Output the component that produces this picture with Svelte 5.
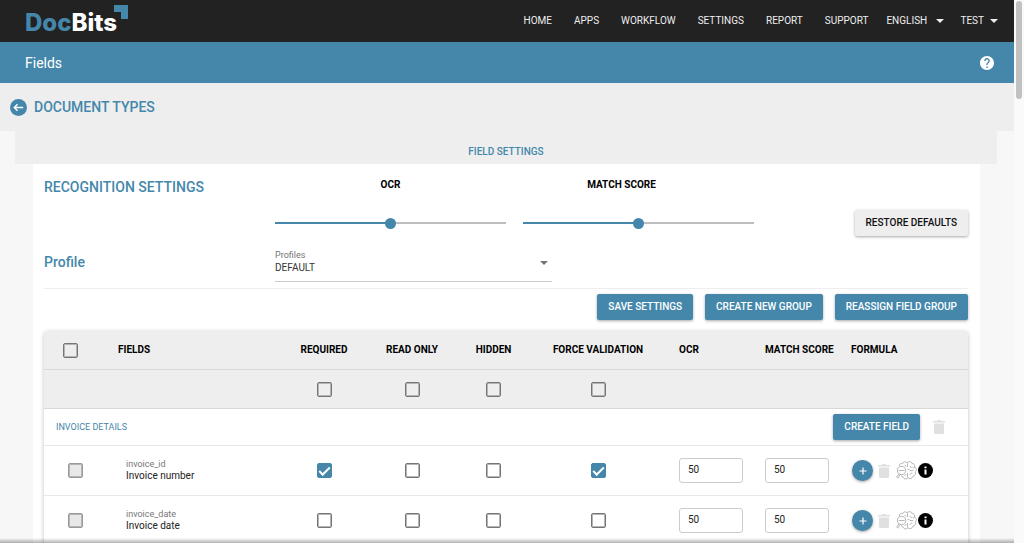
<script>
  const navItems = ['HOME', 'APPS', 'WORKFLOW', 'SETTINGS', 'REPORT', 'SUPPORT'];
  const flags = ['Required', 'Read only', 'Hidden', 'Force validation'];

  let ocr = 50;
  let matchScore = 50;

  let fields = [
    { id: 'invoice_id', name: 'Invoice number', flags: [true, false, false, true], ocr: 50, match: 50 },
    { id: 'invoice_date', name: 'Invoice date', flags: [false, false, false, false], ocr: 50, match: 50 }
  ];
</script>

<div class="app">
  <div class="page">
    <header class="topbar">
      <a class="logo" href="#home" aria-label="DocBits">
        <span class="logo-text"><span class="logo-doc">Doc</span>Bits</span>
        <svg class="logo-mark" viewBox="0 0 14 14" aria-hidden="true">
          <path d="M0 0h14v14H7V7H0z" fill="#4487ab" />
        </svg>
      </a>
      <nav class="nav">
        {#each navItems as item}
          <a href="#{item.toLowerCase()}">{item}</a>
        {/each}
        <div class="language">
          <select aria-label="Language">
            <option>ENGLISH</option>
          </select>
          <svg class="caret" viewBox="0 0 8 4" aria-hidden="true"><path d="M0 0h8L4 4z" /></svg>
        </div>
        <button class="user" type="button">
          TEST
          <svg class="caret" viewBox="0 0 8 4" aria-hidden="true"><path d="M0 0h8L4 4z" /></svg>
        </button>
      </nav>
    </header>

    <div class="titlebar">
      <span>Fields</span>
      <button class="icon-btn" type="button" aria-label="Help">
        <svg class="help" viewBox="2 2 20 20" aria-hidden="true">
          <path fill="#fff" d="M12 2C6.48 2 2 6.48 2 12s4.48 10 10 10 10-4.48 10-10S17.52 2 12 2zm1 17h-2v-2h2v2zm2.07-7.75l-.9.92C13.45 12.9 13 13.5 13 15h-2v-.5c0-1.1.45-2.1 1.17-2.83l1.24-1.26c.37-.36.59-.86.59-1.41 0-1.1-.9-2-2-2s-2 .9-2 2H8c0-2.21 1.79-4 4-4s4 1.79 4 4c0 .88-.36 1.68-.93 2.25z" />
        </svg>
      </button>
    </div>

    <div class="breadcrumb">
      <button class="icon-btn" type="button" aria-label="Back">
        <svg class="back" viewBox="0 0 18 18" aria-hidden="true">
          <circle cx="9" cy="9" r="9" fill="#4487ab" />
          <path d="M14 9H4.500M8 5.500L4.500 9L8 12.500" fill="none" stroke="#fff" stroke-width="1.500" />
        </svg>
      </button>
      <h1>DOCUMENT TYPES</h1>
    </div>

    <div class="tabs">
      <a href="#field-settings">FIELD SETTINGS</a>
    </div>

    <main class="content">
      <div class="row titles">
        <h2>RECOGNITION SETTINGS</h2>
        <label for="ocr">OCR</label>
        <label for="match">MATCH SCORE</label>
      </div>

      <div class="row sliders">
        <input id="ocr" type="range" bind:value={ocr} style="--value: {ocr}%" />
        <input id="match" type="range" bind:value={matchScore} style="--value: {matchScore}%" />
        <button class="btn btn-light" type="button">RESTORE DEFAULTS</button>
      </div>

      <div class="row profile">
        <h2>Profile</h2>
        <div class="select-field">
          <label for="profiles">Profiles</label>
          <select id="profiles">
            <option>DEFAULT</option>
          </select>
          <svg class="caret" viewBox="0 0 8 4" aria-hidden="true"><path d="M0 0h8L4 4z" /></svg>
        </div>
      </div>

      <div class="actions">
        <button class="btn" type="button">SAVE SETTINGS</button>
        <button class="btn" type="button">CREATE NEW GROUP</button>
        <button class="btn" type="button">REASSIGN FIELD GROUP</button>
      </div>

      <table>
        <colgroup>
          <col class="col-check" />
          <col />
          <col class="col-required" />
          <col class="col-read" />
          <col class="col-hidden" />
          <col class="col-force" />
          <col class="col-score" />
          <col class="col-score" />
          <col class="col-formula" />
        </colgroup>
        <thead>
          <tr>
            <th class="select-all"><input type="checkbox" aria-label="Select all fields" /></th>
            <th class="fields-head">FIELDS</th>
            <th class="center">REQUIRED</th>
            <th class="center">READ ONLY</th>
            <th class="center">HIDDEN</th>
            <th class="center">FORCE VALIDATION</th>
            <th>OCR</th>
            <th>MATCH SCORE</th>
            <th>FORMULA</th>
          </tr>
          <tr>
            <td></td>
            <td></td>
            {#each flags as flag}
              <td class="center"><input type="checkbox" aria-label="{flag} for all" /></td>
            {/each}
            <td></td>
            <td></td>
            <td></td>
          </tr>
        </thead>
        <tbody>
          <tr class="group">
            <td colspan="9">
              <div class="group-bar">
                <span>INVOICE DETAILS</span>
                <button class="btn" type="button">CREATE FIELD</button>
                <button class="icon-btn" type="button" aria-label="Delete group">
                  <svg class="trash" viewBox="0 0 12 14" aria-hidden="true">
                    <path d="M0 1h3.500l1-1h3l1 1H12v1.500H0zM1 3.500h10V12.500a1.500 1.500 0 0 1-1.500 1.500h-7A1.500 1.500 0 0 1 1 12.500z" />
                  </svg>
                </button>
              </div>
            </td>
          </tr>
          {#each fields as field}
            <tr class="field">
              <td class="select-row"><input type="checkbox" disabled aria-label="Select {field.name}" /></td>
              <td class="name">
                <small>{field.id}</small>
                <span>{field.name}</span>
              </td>
              {#each flags as flag, i}
                <td class="center">
                  <input type="checkbox" bind:checked={field.flags[i]} aria-label="{field.name} {flag}" />
                </td>
              {/each}
              <td><input class="score" type="text" bind:value={field.ocr} aria-label="{field.name} OCR" /></td>
              <td><input class="score" type="text" bind:value={field.match} aria-label="{field.name} match score" /></td>
              <td>
                <div class="tools">
                  <button class="add" type="button" aria-label="Add formula">
                    <svg viewBox="0 0 8 8" aria-hidden="true"><path d="M4 0.500v7M0.500 4h7" stroke="#fff" stroke-width="1.200" /></svg>
                  </button>
                  <button class="icon-btn" type="button" aria-label="Delete field">
                    <svg class="trash" viewBox="0 0 12 14" aria-hidden="true">
                      <path d="M0 1h3.500l1-1h3l1 1H12v1.500H0zM1 3.500h10V12.500a1.500 1.500 0 0 1-1.500 1.500h-7A1.500 1.500 0 0 1 1 12.500z" />
                    </svg>
                  </button>
                  <button class="icon-btn" type="button" aria-label="Training">
                    <svg class="brain" viewBox="0 0 21 19" aria-hidden="true">
                      <circle cx="5.500" cy="9.500" r="4.200" />
                      <path d="M2.500 9.500h6M3 12.900L0.700 16l1.100 1.200L4.300 13.600" />
                      <path d="M3.500 5C3 3 5 2 6.500 2.700C7 0.800 9.800 0.200 11 1.800C12.500 0 15.800 0.500 16 2.500C18.300 2.500 19.300 4.500 18.500 6C20.700 7 21 10 19.200 11C20.300 13 19 15.200 17 15C16.500 17.500 13.500 18.500 12 16.700C10.500 18.700 7.500 18 7.300 16C6 16 5.500 15.500 5.500 14.500" />
                      <path d="M11.500 2.200V6M11.500 12v4.500M14 5c.3 1.200 1.200 1.600 2.400 1.300M18.500 6c-.3.800-.8 1.200-1.500 1.300M11.500 8.500c1.800-.5 2.300.5 2.500 1h3.300M16.500 12.200c-1.300-.4-2.300.3-2.300 1.500M8.500 4.300c1 0 1.400.5 1.400 1.400M8.500 14.500c1 0 1.500-.5 1.500-1.500" />
                    </svg>
                  </button>
                  <button class="icon-btn" type="button" aria-label="Info">
                    <svg class="info" viewBox="0 0 15 15" aria-hidden="true">
                      <circle cx="7.500" cy="7.500" r="7.500" />
                      <path d="M6.500 3.500h2v1.700h-2zM6.500 6.500h2v5h-2z" fill="#fff" />
                    </svg>
                  </button>
                </div>
              </td>
            </tr>
          {/each}
        </tbody>
      </table>
    </main>
    <div class="bottom-shadow"></div>
  </div>
  <div class="scrollbar"><div class="thumb"></div></div>
</div>

<style>
  :global(body) {
    background: #f7f7f7;
    font-family: Roboto, "Liberation Sans", sans-serif;
    font-size: 10px;
    line-height: 14px;
    color: #222;
  }

  .app {
    display: flex;
    height: 100vh;
    overflow: hidden;
  }

  .page {
    position: relative;
    flex: 1;
    overflow: hidden;
  }

  .scrollbar {
    width: 10px;
    box-sizing: border-box;
    padding: 1px 2px;
    background: #fafafa;
  }

  .thumb {
    height: 18vh;
    border-radius: 3px;
    background: #c1c1c1;
  }

  button,
  input,
  select {
    font: inherit;
    color: inherit;
    margin: 0;
  }

  select {
    appearance: none;
    border: 0;
    padding: 0;
    background: none;
  }

  svg {
    display: block;
  }

  a {
    color: inherit;
    text-decoration: none;
  }

  h1,
  h2 {
    margin: 0;
    font-size: 14px;
    line-height: 18px;
    font-weight: 500;
    color: #4487ab;
  }

  .icon-btn {
    padding: 0;
    border: 0;
    background: none;
  }

  .topbar {
    display: flex;
    align-items: center;
    justify-content: space-between;
    height: 42px;
    padding: 0 16px 0 25px;
    background: #222;
    color: #eee;
  }

  .logo {
    display: flex;
    align-items: flex-start;
    color: #fff;
  }

  .logo-text {
    padding-top: 4px;
    font-family: Inter, sans-serif;
    font-size: 24px;
    line-height: 28px;
    font-weight: 800;
  }

  .logo-doc {
    color: #4487ab;
  }

  .logo-mark {
    width: 14px;
    height: 14px;
    margin-left: -3px;
  }

  .nav {
    display: flex;
    align-items: center;
    gap: 22px;
    height: 40px;
  }

  .language {
    display: flex;
    align-items: center;
    gap: 9px;
    margin-left: -4px;
  }

  .user {
    display: flex;
    align-items: center;
    gap: 6px;
    margin-left: -6px;
    padding: 0;
    border: 0;
    background: none;
  }

  .caret {
    width: 8px;
    height: 4px;
    fill: currentColor;
  }

  .titlebar {
    display: flex;
    align-items: center;
    justify-content: space-between;
    height: 41px;
    padding: 0 20px 0 25px;
    background: #4487ab;
    color: #fff;
    font-size: 14px;
  }

  .help {
    width: 14px;
    height: 14px;
  }

  .breadcrumb {
    display: flex;
    align-items: center;
    gap: 7px;
    height: 48px;
    padding: 0 10px;
    background: #eee;
  }

  .back {
    width: 17px;
    height: 17px;
  }

  .tabs {
    display: flex;
    align-items: center;
    justify-content: center;
    height: 33px;
    margin: 0 17px 0 15px;
    padding-top: 8px;
    box-sizing: border-box;
    background: #eee;
    color: #4487ab;
    font-weight: 500;
  }

  .content {
    margin: 0 34px 0 33px;
    padding: 14px 12px 0 11px;
    background: #fff;
  }

  .row {
    display: flex;
    align-items: center;
  }

  .titles > * {
    width: 25%;
  }

  .titles label {
    padding-bottom: 4px;
    text-align: center;
    font-weight: 700;
    color: #000;
  }

  .sliders {
    gap: 17px;
    padding: 14px 0 10px 25%;
  }

  input[type="range"] {
    appearance: none;
    width: calc(100% / 3);
    height: 11px;
    background: linear-gradient(to right, #4487ab var(--value), #bdbdbd var(--value)) center / 100% 2px no-repeat;
  }

  input[type="range"]::-webkit-slider-thumb {
    appearance: none;
    width: 11px;
    height: 11px;
    border-radius: 50%;
    background: #4487ab;
  }

  .btn {
    height: 26px;
    padding: 0 11px;
    border: 0;
    border-radius: 2px;
    background: #4487ab;
    color: #fff;
    font-weight: 500;
    white-space: nowrap;
    box-shadow: 0 1px 3px rgba(0, 0, 0, 0.35);
  }

  .btn-light {
    margin-left: auto;
    background: #eee;
    color: #111;
  }

  .profile {
    padding-bottom: 6px;
    border-bottom: 1px solid #eee;
  }

  .profile h2 {
    width: 25%;
    padding-bottom: 4px;
  }

  .select-field {
    display: grid;
    grid-template-columns: 1fr auto;
    align-items: center;
    width: 30%;
    box-sizing: border-box;
    padding: 3px 4px 6px 0;
    border-bottom: 1px solid #ccc;
    color: #757575;
  }

  .select-field label {
    grid-column: 1 / -1;
    font-size: 9px;
    line-height: 12px;
  }

  .select-field select {
    color: #333;
  }

  .select-field .caret {
    align-self: start;
  }

  .actions {
    display: flex;
    justify-content: flex-end;
    gap: 12px;
    padding: 5px 0 11px;
  }

  table {
    width: 100%;
    table-layout: fixed;
    border-spacing: 0;
    border-radius: 4px;
    box-shadow: 0 1px 4px rgba(0, 0, 0, 0.25);
  }

  .col-check {
    width: 65px;
  }

  .col-required {
    width: 84px;
  }

  .col-read {
    width: 92px;
  }

  .col-hidden {
    width: 71px;
  }

  .col-force {
    width: 138px;
  }

  .col-score {
    width: 86px;
  }

  .col-formula {
    width: 129px;
  }

  th,
  td {
    padding: 0 0 0 12px;
    text-align: left;
    white-space: nowrap;
    border-bottom: 1px solid #e8e8e8;
  }

  th {
    font-weight: 700;
    color: #000;
  }

  thead th,
  thead td {
    height: 38px;
    background: #eee;
    border-color: #d8d8d8;
  }

  thead th:first-child {
    border-top-left-radius: 4px;
  }

  thead th:last-child {
    border-top-right-radius: 4px;
  }

  th.fields-head {
    padding-left: 9px;
  }

  th.center,
  td.center {
    padding: 0;
    text-align: center;
  }

  th.select-all {
    padding-left: 19px;
  }

  td.select-row {
    padding-left: 24px;
  }

  .group td {
    height: 36px;
  }

  .group-bar {
    display: flex;
    align-items: center;
    padding-right: 23px;
    color: #4487ab;
  }

  .group-bar span {
    font-size: 9px;
  }

  .group-bar .btn {
    margin: 0 13px 0 auto;
  }

  .field td {
    height: 49px;
  }

  .field td.name {
    padding: 0 0 2px 17px;
    box-sizing: border-box;
  }

  .name small,
  .name span {
    display: block;
    line-height: 12px;
  }

  .name small {
    font-size: 9px;
    color: #777;
  }

  input[type="checkbox"] {
    appearance: none;
    display: inline-block;
    width: 15px;
    height: 15px;
    border: 1px solid #757575;
    border-radius: 2px;
    box-shadow: inset 0 0 0 1px #b5b5b5;
    vertical-align: middle;
  }

  input[type="checkbox"]:disabled {
    background: #e8e8e8;
    border-color: #999;
  }

  input[type="checkbox"]:checked {
    display: inline-grid;
    place-items: center;
    border-color: #4487ab;
    background: #4487ab;
    box-shadow: none;
  }

  input[type="checkbox"]:checked::after {
    content: "";
    width: 11px;
    height: 6px;
    border-left: 2px solid #fff;
    border-bottom: 2px solid #fff;
    box-sizing: border-box;
    transform: translateY(-1px) rotate(-45deg);
  }

  .score {
    width: 64px;
    height: 25px;
    box-sizing: border-box;
    padding: 0 8px 2px;
    border: 1px solid #ccc;
    border-radius: 3px;
    background: #fff;
    vertical-align: middle;
  }

  .tools {
    display: flex;
    align-items: center;
    padding-left: 1px;
  }

  .add {
    display: grid;
    place-items: center;
    width: 21px;
    height: 21px;
    margin-right: 5px;
    padding: 0;
    border: 0;
    border-radius: 50%;
    background: #4487ab;
    box-shadow: 0 1px 3px rgba(0, 0, 0, 0.35);
  }

  .add svg {
    width: 8px;
    height: 8px;
  }

  .trash {
    width: 12px;
    height: 14px;
    fill: #e0e0e0;
  }

  .brain {
    width: 21px;
    height: 19px;
    margin: 0 1px 0 6px;
    fill: none;
    stroke: #888;
    stroke-width: 0.6px;
  }

  .info {
    width: 15px;
    height: 15px;
  }

  .bottom-shadow {
    position: absolute;
    left: 0;
    right: 0;
    bottom: 0;
    height: 5px;
    background: linear-gradient(rgba(0, 0, 0, 0), rgba(0, 0, 0, 0.3));
  }
</style>
